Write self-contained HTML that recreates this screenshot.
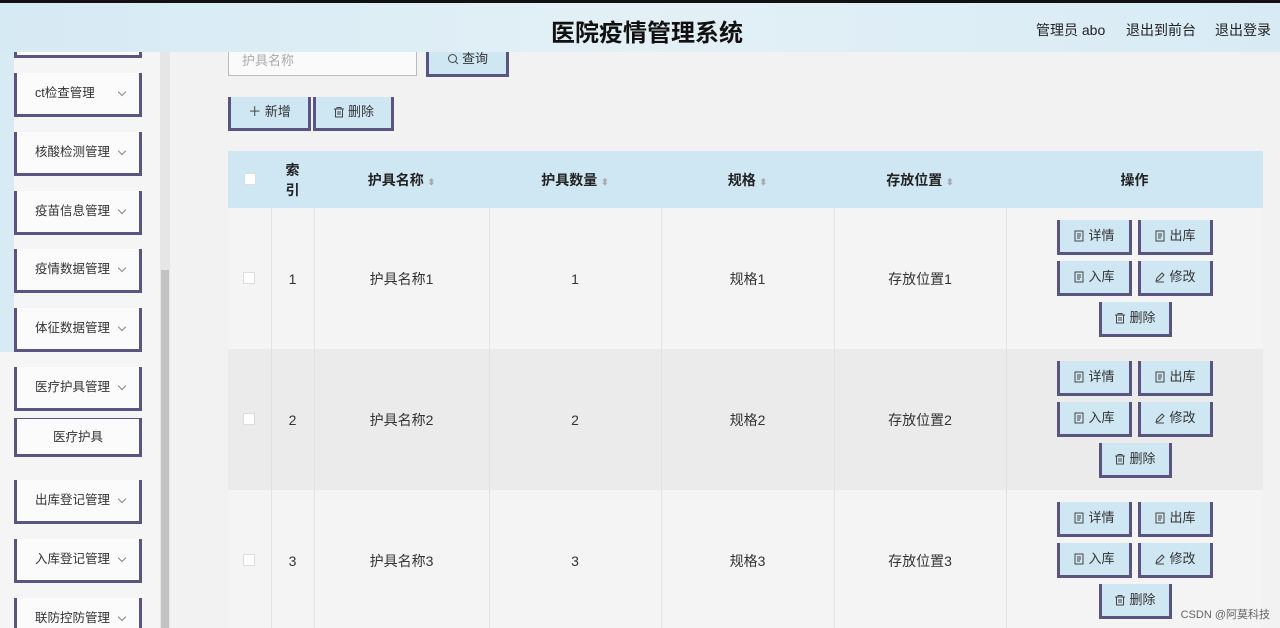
<!DOCTYPE html>
<html><head><meta charset="utf-8"><style>
*{margin:0;padding:0;box-sizing:border-box}
html,body{width:1280px;height:628px;overflow:hidden}
body{background:#f2f2f2;font-family:"Liberation Sans","Noto Sans CJK SC",sans-serif;font-size:13px;color:#333;position:relative}
.top{position:absolute;left:0;top:0;width:1280px;height:3px;background:#111}
.hdr{position:absolute;left:0;top:3px;width:1280px;height:49px;background:linear-gradient(90deg,#d6eaf4,#e3f0f6 50%,#d8ebf5);z-index:5}
.hdr h1{position:absolute;left:14px;right:0;text-align:center;top:10px;font-size:24px;color:#111;font-weight:bold}
.hdr .r{position:absolute;top:17px;font-size:14px;color:#222}
.side{position:absolute;left:0;top:52px;width:160px;height:576px;background:#f5f5f5}
.sb{position:absolute;left:160px;top:52px;width:10px;height:576px;background:#e6e6e6}
.sb i{position:absolute;left:1px;top:218px;width:8px;height:370px;background:#c2c2c2}
.strip{position:absolute;left:0;top:52px;width:14px;height:300px;background:#d8ebf5}
.it{position:absolute;left:14px;width:128px;height:44px;background:#fbfbfb;border:3px solid #5a5480;border-top:none;font-size:12.5px;color:#333;line-height:41px;padding-left:18px}
.it:after{content:"";position:absolute;right:14px;top:16px;width:5px;height:5px;border-right:1px solid #888;border-bottom:1px solid #888;transform:rotate(45deg)}
.it.s{text-align:center;padding-left:0}.it.s:after{display:none}
.btn{position:absolute;background:#cfe6f3;border:3px solid #5a5480;border-top:none;font-size:13px;color:#333;text-align:center}
.btn svg{vertical-align:-2px;margin-right:3px}
.inp{position:absolute;left:228px;top:45px;width:189px;height:31px;border:1px solid #bbb;background:#fafafa;color:#aaa;padding-left:13px;line-height:29px}
table{position:absolute;left:228px;top:151px;width:1035px;border-collapse:collapse;table-layout:fixed}
th{background:#cfe6f3;height:57px;font-weight:bold;color:#222;font-size:14px}
td{height:141px;text-align:center;border-left:1px solid #e2e2e2;font-size:14px;color:#333;background:#f4f4f4;padding:0}
tr.g td{background:#ebebeb}
td:first-child{border-left:none}
.cb{display:inline-block;width:12px;height:12px;border:1px solid #ddd;background:#fff}
.ar{color:#aaa;font-size:9px}
.ops{position:relative;height:141px}
.ops .btn{width:75px;height:35px;line-height:31px}
</style></head><body>
<svg width="0" height="0" style="position:absolute"><defs>
<symbol id="doc" viewBox="0 0 12 12"><rect x="2" y="1" width="8" height="10" fill="none" stroke="#444"/><path d="M4 4h4M4 6h4M4 8h3" stroke="#444"/></symbol>
<symbol id="del" viewBox="0 0 12 12"><path d="M1 3h10M4 3V1.5h4V3M2.5 3v8h7V3M5 5v4M7 5v4" fill="none" stroke="#444"/></symbol>
<symbol id="ed" viewBox="0 0 12 12"><path d="M2 10l1-3 5-5 2 2-5 5zM2 11h8" fill="none" stroke="#444"/></symbol>
<symbol id="se" viewBox="0 0 12 12"><circle cx="5.5" cy="5.5" r="4" fill="none" stroke="#444"/><path d="M8.5 8.5l2.5 2.5" stroke="#444"/></symbol>
</defs></svg>
<div class="top"></div>
<div class="hdr"><h1>医院疫情管理系统</h1>
<span class="r" style="left:1036px">管理员 abo</span><span class="r" style="left:1126px">退出到前台</span><span class="r" style="left:1215px">退出登录</span></div>
<div class="side"></div><div class="strip"></div><div class="sb"><i></i></div>
<div class="it" style="top:14px"></div>
<div class="it" style="top:73px">ct检查管理</div>
<div class="it" style="top:132px">核酸检测管理</div>
<div class="it" style="top:191px">疫苗信息管理</div>
<div class="it" style="top:249px">疫情数据管理</div>
<div class="it" style="top:308px">体征数据管理</div>
<div class="it" style="top:367px">医疗护具管理</div>
<div class="it s" style="top:418px;height:39px;line-height:37px;border-top:1px solid #5a5480">医疗护具</div>
<div class="it" style="top:480px">出库登记管理</div>
<div class="it" style="top:539px">入库登记管理</div>
<div class="it" style="top:598px">联防控防管理</div>
<div class="inp">护具名称</div>
<div class="btn" style="left:426px;top:45px;width:83px;height:32px;line-height:28px"><svg width="12" height="12"><use href="#se"/></svg>查询</div>
<div class="btn" style="left:228px;top:97px;width:83px;height:34px;line-height:30px">＋ 新增</div>
<div class="btn" style="left:313px;top:97px;width:81px;height:34px;line-height:30px"><svg width="12" height="12"><use href="#del"/></svg>删除</div>
<table>
<colgroup><col style="width:43px"><col style="width:43px"><col style="width:175px"><col style="width:172px"><col style="width:173px"><col style="width:172px"><col></colgroup>
<tr><th><span class="cb"></span></th><th>索<br>引</th><th>护具名称 <span class="ar">⬍</span></th><th>护具数量 <span class="ar">⬍</span></th><th>规格 <span class="ar">⬍</span></th><th>存放位置 <span class="ar">⬍</span></th><th>操作</th></tr>
<tr><td><span class="cb"></span></td><td>1</td><td>护具名称1</td><td>1</td><td>规格1</td><td>存放位置1</td><td><div class="ops"><div class="btn" style="left:50px;top:12px"><svg width="12" height="12"><use href="#doc"/></svg>详情</div><div class="btn" style="left:131px;top:12px"><svg width="12" height="12"><use href="#doc"/></svg>出库</div><div class="btn" style="left:50px;top:53px"><svg width="12" height="12"><use href="#doc"/></svg>入库</div><div class="btn" style="left:131px;top:53px"><svg width="12" height="12"><use href="#ed"/></svg>修改</div><div class="btn" style="left:92px;top:94px;width:73px"><svg width="12" height="12"><use href="#del"/></svg>删除</div></div></td></tr>
<tr class="g"><td><span class="cb"></span></td><td>2</td><td>护具名称2</td><td>2</td><td>规格2</td><td>存放位置2</td><td><div class="ops"><div class="btn" style="left:50px;top:12px"><svg width="12" height="12"><use href="#doc"/></svg>详情</div><div class="btn" style="left:131px;top:12px"><svg width="12" height="12"><use href="#doc"/></svg>出库</div><div class="btn" style="left:50px;top:53px"><svg width="12" height="12"><use href="#doc"/></svg>入库</div><div class="btn" style="left:131px;top:53px"><svg width="12" height="12"><use href="#ed"/></svg>修改</div><div class="btn" style="left:92px;top:94px;width:73px"><svg width="12" height="12"><use href="#del"/></svg>删除</div></div></td></tr>
<tr><td><span class="cb"></span></td><td>3</td><td>护具名称3</td><td>3</td><td>规格3</td><td>存放位置3</td><td><div class="ops"><div class="btn" style="left:50px;top:12px"><svg width="12" height="12"><use href="#doc"/></svg>详情</div><div class="btn" style="left:131px;top:12px"><svg width="12" height="12"><use href="#doc"/></svg>出库</div><div class="btn" style="left:50px;top:53px"><svg width="12" height="12"><use href="#doc"/></svg>入库</div><div class="btn" style="left:131px;top:53px"><svg width="12" height="12"><use href="#ed"/></svg>修改</div><div class="btn" style="left:92px;top:94px;width:73px"><svg width="12" height="12"><use href="#del"/></svg>删除</div></div></td></tr>
</table>
<div style="position:absolute;right:10px;bottom:6px;font-size:11px;color:#666">CSDN @阿莫科技</div>
</body></html>
